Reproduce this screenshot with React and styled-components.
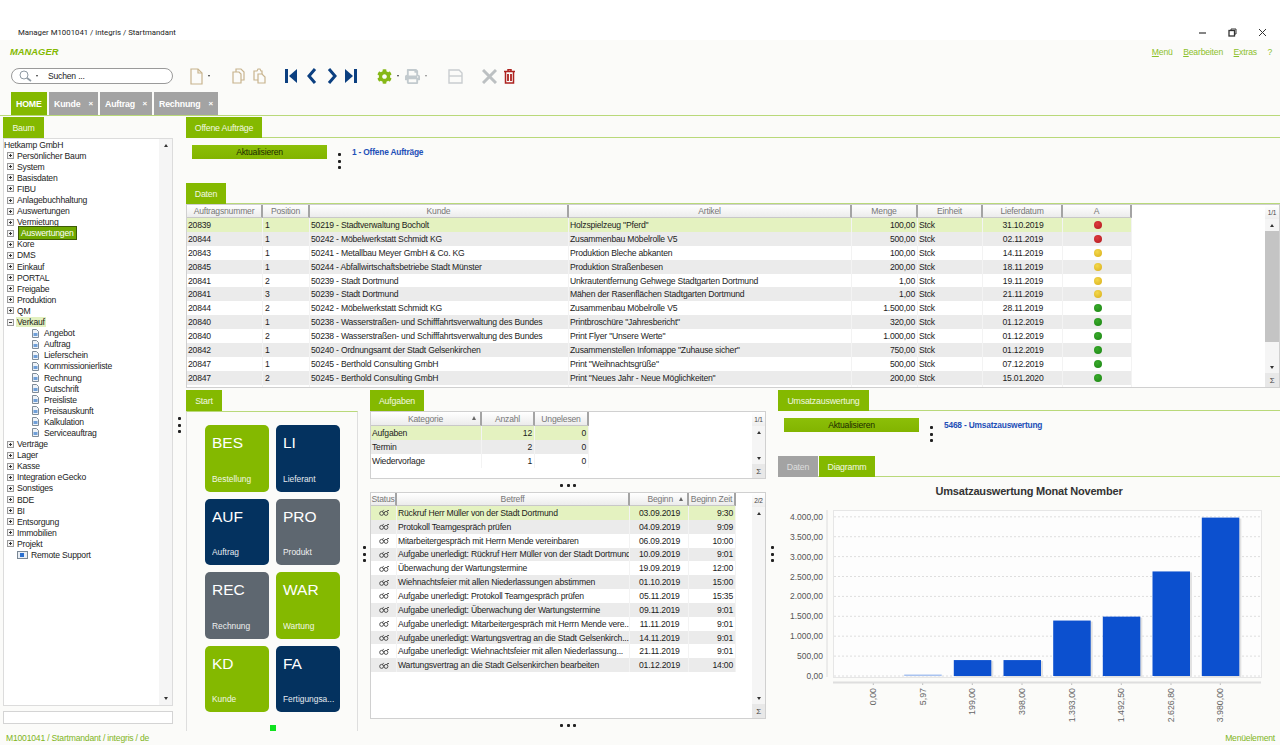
import React from 'react'
import styled, { createGlobalStyle } from 'styled-components'
import { FaCog, FaPrint } from 'react-icons/fa'

const GREEN = '#84b900'
const NAVY = '#04325f'
const SLATE = '#5e6770'

const GlobalStyle = createGlobalStyle`
  html, body { margin: 0; padding: 0; background: #fbfbf9; }
  * { box-sizing: border-box; }
`

const treeTop = ['Persönlicher Baum', 'System', 'Basisdaten', 'FIBU', 'Anlagebuchhaltung', 'Auswertungen', 'Vermietung']
const treeMid = ['Kore', 'DMS', 'Einkauf', 'PORTAL', 'Freigabe', 'Produktion', 'QM']
const treeSub = ['Angebot', 'Auftrag', 'Lieferschein', 'Kommissionierliste', 'Rechnung', 'Gutschrift', 'Preisliste', 'Preisauskunft', 'Kalkulation', 'Serviceauftrag']
const treeEnd = ['Verträge', 'Lager', 'Kasse', 'Integration eGecko', 'Sonstiges', 'BDE', 'BI', 'Entsorgung', 'Immobilien', 'Projekt']

const orders = [
  ['20839', '1', '50219 - Stadtverwaltung Bocholt', 'Holzspielzeug "Pferd"', '100,00', '31.10.2019', 'red'],
  ['20844', '1', '50242 - Möbelwerkstatt Schmidt KG', 'Zusammenbau Möbelrolle V5', '500,00', '02.11.2019', 'red'],
  ['20843', '1', '50241 - Metallbau Meyer GmbH & Co. KG', 'Produktion Bleche abkanten', '100,00', '14.11.2019', 'yellow'],
  ['20845', '1', '50244 - Abfallwirtschaftsbetriebe Stadt Münster', 'Produktion Straßenbesen', '200,00', '18.11.2019', 'yellow'],
  ['20841', '2', '50239 - Stadt Dortmund', 'Unkrautentfernung Gehwege Stadtgarten Dortmund', '1,00', '19.11.2019', 'yellow'],
  ['20841', '3', '50239 - Stadt Dortmund', 'Mähen der Rasenflächen Stadtgarten Dortmund', '1,00', '21.11.2019', 'yellow'],
  ['20844', '2', '50242 - Möbelwerkstatt Schmidt KG', 'Zusammenbau Möbelrolle V5', '1.500,00', '28.11.2019', 'green'],
  ['20840', '1', '50238 - Wasserstraßen- und Schifffahrtsverwaltung des Bundes', 'Printbroschüre "Jahresbericht"', '320,00', '01.12.2019', 'green'],
  ['20840', '2', '50238 - Wasserstraßen- und Schifffahrtsverwaltung des Bundes', 'Print Flyer "Unsere Werte"', '1.000,00', '01.12.2019', 'green'],
  ['20842', '1', '50240 - Ordnungsamt der Stadt Gelsenkirchen', 'Zusammenstellen Infomappe "Zuhause sicher"', '750,00', '01.12.2019', 'green'],
  ['20847', '1', '50245 - Berthold Consulting GmbH', 'Print "Weihnachtsgrüße"', '500,00', '07.12.2019', 'green'],
  ['20847', '2', '50245 - Berthold Consulting GmbH', 'Print "Neues Jahr - Neue Möglichkeiten"', '200,00', '15.01.2020', 'green'],
  ['', '', '', '', '', '', 'green'],
]

const categories = [['Aufgaben', '12', '0'], ['Termin', '2', '0'], ['Wiedervorlage', '1', '0']]

const tasks = [
  ['Rückruf Herr Müller von der Stadt Dortmund', '03.09.2019', '9:30'],
  ['Protokoll Teamgespräch prüfen', '04.09.2019', '9:09'],
  ['Mitarbeitergespräch mit Herrn Mende vereinbaren', '06.09.2019', '10:00'],
  ['Aufgabe unerledigt: Rückruf Herr Müller von der Stadt Dortmund', '10.09.2019', '9:01'],
  ['Überwachung der Wartungstermine', '19.09.2019', '12:00'],
  ['Wiehnachtsfeier mit allen Niederlassungen abstimmen', '01.10.2019', '15:00'],
  ['Aufgabe unerledigt: Protokoll Teamgespräch prüfen', '05.11.2019', '15:35'],
  ['Aufgabe unerledigt: Überwachung der Wartungstermine', '09.11.2019', '9:01'],
  ['Aufgabe unerledigt: Mitarbeitergespräch mit Herrn Mende vere...', '11.11.2019', '9:01'],
  ['Aufgabe unerledigt: Wartungsvertrag an die Stadt Gelsenkirch...', '14.11.2019', '9:01'],
  ['Aufgabe unerledigt: Wiehnachtsfeier mit allen Niederlassung...', '21.11.2019', '9:01'],
  ['Wartungsvertrag an die Stadt Gelsenkirchen bearbeiten', '01.12.2019', '14:00'],
]

const tiles = [
  ['BES', 'Bestellung', GREEN], ['LI', 'Lieferant', NAVY],
  ['AUF', 'Auftrag', NAVY], ['PRO', 'Produkt', SLATE],
  ['REC', 'Rechnung', SLATE], ['WAR', 'Wartung', GREEN],
  ['KD', 'Kunde', GREEN], ['FA', 'Fertigungsa...', NAVY],
]

const bars = [
  ['0,00', 0], ['5,97', 6], ['199,00', 400], ['398,00', 400],
  ['1.393,00', 1393], ['1.492,50', 1492], ['2.626,80', 2627], ['3.980,00', 3980],
]
const yTicks = [4000, 3500, 3000, 2500, 2000, 1500, 1000, 500, 0]
const barCenters = [873.3, 922.7, 972.3, 1022, 1071.7, 1121.3, 1171, 1220.3]
const yOf = v => 676 - v * 0.0398
const money = v => (v >= 1000 ? `${Math.floor(v / 1000)}.${String(v % 1000).padStart(3, '0')},00` : `${v},00`)

const Page = styled.div`
  width: 1280px;
  height: 745px;
  overflow: hidden;
  display: flex;
  flex-direction: column;
  background: #fbfbf9;
  color: #1c1c1c;
  font-family: "Liberation Sans", Arial, sans-serif;
  font-size: 8.6px;
  letter-spacing: -0.2px;
`
const TopGap = styled.div`
  height: 24px;
  background: #fff;
`
const TitleBar = styled.div`
  height: 16px;
  background: #fff;
  display: flex;
  align-items: center;
  justify-content: space-between;
  padding: 0 13px 0 18px;
  font-family: Roboto, sans-serif;
  font-size: 7.8px;
  letter-spacing: 0;
`
const WindowButtons = styled.div`
  display: flex;
  gap: 21px;
  align-items: center;
`
const MenuBar = styled.div`
  height: 22px;
  display: flex;
  align-items: center;
  justify-content: space-between;
  padding: 1px 8px 0 10px;
`
const Brand = styled.div`
  color: ${GREEN};
  font-weight: bold;
  font-style: italic;
  font-size: 9.4px;
  letter-spacing: 0;
`
const MenuLinks = styled.div`
  display: flex;
  gap: 10.5px;
  color: #8cc02a;
  letter-spacing: -0.17px;
  u { text-underline-offset: 1px; }
`
const Toolbar = styled.div`
  height: 28px;
  display: flex;
  align-items: center;
  padding-left: 11px;
`
const SearchBox = styled.div`
  width: 162px;
  height: 16px;
  border: 1px solid #9a9a9a;
  border-radius: 8px;
  background: #fff;
  display: flex;
  align-items: center;
  padding-left: 7px;
  flex-shrink: 0;
`
const SearchLabel = styled.span`
  margin-left: 10px;
`
const ToolSlot = styled.div`
  margin-left: ${p => p.$left}px;
  display: flex;
  align-items: center;
  flex-shrink: 0;
`
const Caret = styled.span`
  width: 0;
  height: 0;
  margin-left: ${p => p.$left || 5}px;
  border-left: 1.5px solid transparent;
  border-right: 1.5px solid transparent;
  border-top: 2px solid ${p => p.$color || '#333'};
`
const TabBar = styled.div`
  height: 26px;
  display: flex;
  align-items: flex-end;
  gap: 2px;
  padding: 0 0 0 11px;
  border-bottom: 1px solid #b9d97a;
`
const AppTab = styled.div`
  height: 23px;
  width: ${p => p.$width}px;
  background: ${p => (p.$active ? GREEN : '#a3a3a3')};
  color: #fff;
  font-weight: bold;
  font-size: 8.8px;
  display: flex;
  align-items: center;
  justify-content: space-between;
  padding: 0 5px;
  small { font-size: 8px; }
`
const Main = styled.div`
  flex: 1;
  min-height: 0;
  display: flex;
  padding: 1px 0 0 3px;
`
const LeftColumn = styled.div`
  width: 170px;
  display: flex;
  flex-direction: column;
`
const TabRow = styled.div`
  display: flex;
  gap: 1px;
  height: ${p => p.$height || 21}px;
  border-bottom: ${p => (p.$line === false ? 'none' : '1px solid #b9d97a')};
  flex-shrink: 0;
`
const PanelTab = styled.div`
  width: ${p => p.$width}px;
  background: ${p => (p.$muted ? '#a3a3a3' : GREEN)};
  color: ${p => (p.$muted ? '#ddd' : '#f2f8e0')};
  font-size: 8.8px;
  display: flex;
  align-items: center;
  justify-content: center;
  margin-bottom: -1px;
`
const TreeBox = styled.div`
  height: 568px;
  display: flex;
  border: 1px solid #dcdcdc;
  background: #fff;
`
const Tree = styled.div`
  flex: 1;
  overflow: hidden;
`
const TreeRow = styled.div`
  height: 11.1px;
  display: flex;
  align-items: center;
  white-space: nowrap;
  padding-left: ${p => p.$indent || 0}px;
`
const PlusBox = styled.span`
  width: 7px;
  height: 7px;
  flex-shrink: 0;
  border: 1px solid #9a9a9a;
  margin-right: 3px;
  background:
    linear-gradient(#333, #333) center / 3px 1px no-repeat,
    ${p => (p.$open ? '' : 'linear-gradient(#333, #333) center / 1px 3px no-repeat,')}
    #f4f4f4;
`
const TreeGap = styled.span`
  width: ${p => p.$width}px;
  flex-shrink: 0;
`
const Marked = styled.span`
  background: ${p => (p.$current ? '#6ea800' : '#e3f1c0')};
  color: ${p => (p.$current ? '#fff' : 'inherit')};
  border: ${p => (p.$current ? '1px solid #3e5a08' : 'none')};
  padding: ${p => (p.$current ? '1px 2px' : '0 1px')};
  margin-left: ${p => (p.$current ? 1 : -1)}px;
  line-height: 10px;
`
const TreeScroll = styled.div`
  width: 13px;
  background: #f5f5f5;
  display: flex;
  flex-direction: column;
  justify-content: space-between;
  align-items: center;
  padding: 5px 0;
`
const Arrow = styled.span`
  width: 0;
  height: 0;
  border-left: 2.5px solid transparent;
  border-right: 2.5px solid transparent;
  ${p => (p.$down ? 'border-top: 3px solid #333;' : 'border-bottom: 3px solid #333;')}
`
const TreeInput = styled.div`
  height: 13px;
  margin-top: 5px;
  background: #fff;
  border: 1px solid #d4d4d4;
`
const Gutter = styled.div`
  width: ${p => p.$width || 13}px;
  padding-top: ${p => p.$top || 0}px;
  display: flex;
  flex-direction: column;
  align-items: center;
  flex-shrink: 0;
`
const Dots = styled.div`
  display: flex;
  flex-direction: ${p => (p.$row ? 'row' : 'column')};
  gap: 3.5px;
  justify-content: center;
  span {
    width: 3px;
    height: 3px;
    background: #222;
    border-radius: 1px;
  }
`
const ThreeDots = ({ row }) => (
  <Dots $row={row}><span /><span /><span /></Dots>
)
const Work = styled.div`
  flex: 1;
  min-width: 0;
  display: flex;
  flex-direction: column;
`
const ActionRow = styled.div`
  height: ${p => p.$height}px;
  display: flex;
  align-items: flex-start;
  padding: ${p => p.$top}px 0 0 6px;
  flex-shrink: 0;
`
const RefreshButton = styled.div`
  width: 135px;
  height: 14px;
  background: linear-gradient(#8cbf08, #82b400);
  color: #1c2a00;
  display: flex;
  align-items: center;
  justify-content: center;
`
const ActionDots = styled.div`
  width: 25px;
  padding-top: 8px;
  display: flex;
  justify-content: center;
`
const ReportLink = styled.div`
  color: #1f50b8;
  font-weight: bold;
  font-size: 8.4px;
  padding-top: 2px;
`
const TableFrame = styled.div`
  height: ${p => p.$height}px;
  display: flex;
  border: 1px solid #d0d0d0;
  background: #fff;
  overflow: hidden;
  flex-shrink: 0;
`
const TableBody = styled.div`
  flex: 1;
  min-width: 0;
`
const GridRow = styled.div`
  display: grid;
  grid-template-columns: ${p => p.$cols};
  width: fit-content;
  height: ${p => p.$height}px;
  background: ${p => (p.$selected ? '#e4f2c0' : p.$stripe ? '#ebebeb' : '#fff')};
`
const HeadCell = styled.div`
  position: relative;
  background: linear-gradient(#fff, #ececec);
  border-right: 2px solid #a4a4a4;
  border-bottom: 1px solid #c8c8c8;
  color: #777;
  display: flex;
  align-items: center;
  justify-content: ${p => p.$align || 'center'};
  padding: 0 ${p => (p.$align ? 14 : 2)}px 0 2px;
  white-space: nowrap;
  overflow: hidden;
`
const SortMark = styled.span`
  position: absolute;
  right: 4px;
  top: 4px;
  width: 0;
  height: 0;
  border-left: 2px solid transparent;
  border-right: 2px solid transparent;
  border-bottom: 4px solid #666;
`
const Cell = styled.div`
  display: flex;
  align-items: center;
  justify-content: ${p => p.$align || 'flex-start'};
  padding: 0 ${p => (p.$align === 'flex-end' ? 2 : 0)}px 0 ${p => p.$pad || 1}px;
  border-right: 1px solid #f3f3f3;
  white-space: nowrap;
  overflow: hidden;
`
const Lamp = styled.span`
  width: 8px;
  height: 8px;
  border-radius: 50%;
  flex-shrink: 0;
  background: ${p => ({ red: 'radial-gradient(circle at 40% 35%, #de3a3e, #b01a1e)', yellow: 'radial-gradient(circle at 40% 35%, #f4d84a, #d8ae1c)', green: 'radial-gradient(circle at 40% 35%, #38aa2a, #1c8414)' }[p.$color])};
`
const ScrollRail = styled.div`
  width: ${p => p.$width}px;
  flex-shrink: 0;
  background: #f5f5f5;
  display: flex;
  flex-direction: column;
  align-items: center;
  font-size: 6.5px;
  color: #444;
`
const RailLabel = styled.div`
  height: 14px;
  width: 100%;
  display: flex;
  align-items: center;
  justify-content: center;
  background: linear-gradient(#fff, #eee);
`
const RailArrow = styled.div`
  height: 12px;
  width: 100%;
  display: flex;
  align-items: center;
  justify-content: center;
`
const RailTrack = styled.div`
  flex: 1;
  width: 100%;
  min-height: 0;
`
const RailThumb = styled.div`
  height: ${p => p.$height}px;
  background: #c4c4c4;
`
const RailSum = styled.div`
  height: 14px;
  width: 100%;
  background: #e8e8e8;
  display: flex;
  align-items: center;
  justify-content: center;
  font-size: 8px;
`
const Rail = ({ label, width, thumb }) => (
  <ScrollRail $width={width}>
    <RailLabel>{label}</RailLabel>
    <RailArrow><Arrow /></RailArrow>
    <RailTrack>{thumb ? <RailThumb $height={thumb} /> : null}</RailTrack>
    <RailArrow><Arrow $down /></RailArrow>
    <RailSum>Σ</RailSum>
  </ScrollRail>
)
const BottomRow = styled.div`
  flex: 1;
  min-height: 0;
  display: flex;
  margin-top: 2px;
`
const StartColumn = styled.div`
  width: 172px;
  display: flex;
  flex-direction: column;
  flex-shrink: 0;
`
const StartPanel = styled.div`
  flex: 1;
  border: 1px solid #dedede;
  border-top-color: #b9d97a;
  border-bottom: none;
  padding: 13px 0 0 18px;
  display: flex;
  flex-direction: column;
`
const TileGrid = styled.div`
  display: grid;
  grid-template-columns: 64px 64px;
  grid-auto-rows: 66.5px;
  gap: 7px;
`
const Tile = styled.div`
  background: ${p => p.$color};
  border-radius: 5px;
  color: #fff;
  display: flex;
  flex-direction: column;
  justify-content: space-between;
  padding: 10px 4px 8px 7px;
  overflow: hidden;
  letter-spacing: 0;
  strong {
    font-weight: normal;
    font-size: 15.5px;
    line-height: 16px;
  }
  span {
    font-size: 8.4px;
    white-space: nowrap;
    opacity: .9;
  }
`
const PageMark = styled.div`
  width: 6px;
  height: 6px;
  background: #0fe21f;
  margin: 13px 0 0 65px;
`
const MiddleColumn = styled.div`
  width: 396px;
  display: flex;
  flex-direction: column;
  flex-shrink: 0;
`
const HDots = styled.div`
  height: 13px;
  display: flex;
  align-items: center;
  justify-content: center;
  flex-shrink: 0;
`
const ReportColumn = styled.div`
  flex: 1;
  min-width: 0;
  display: flex;
  flex-direction: column;
`
const ChartTitle = styled.div`
  height: 26px;
  display: flex;
  align-items: center;
  justify-content: center;
  font-weight: bold;
  font-size: 11px;
  color: #333;
  padding-top: 2px;
  flex-shrink: 0;
`
const ChartSvg = styled.svg`
  display: block;
  width: 502px;
  height: 227px;
  font-family: "Liberation Sans", Arial, sans-serif;
  letter-spacing: 0;
`
const StatusBar = styled.div`
  height: 15px;
  flex-shrink: 0;
  display: flex;
  align-items: center;
  justify-content: space-between;
  padding: 0 5px 0 6px;
  color: #7fb51c;
`

const FileIcon = () => (
  <svg width="13" height="17" viewBox="0 0 13 17" fill="none" stroke="#c8b48e" strokeWidth="1.2">
    <path d="M1 1h7l4 4v11H1z" /><path d="M8 1v4h4" />
  </svg>
)
const CopyIcon = () => (
  <svg width="13" height="16" viewBox="0 0 13 16" fill="#fbfbf9" stroke="#c8b48e" strokeWidth="1.2">
    <path d="M4 1h5l3 3v8H4z" /><path d="M1 4h6l2 2v9H1z" />
  </svg>
)
const PasteIcon = () => (
  <svg width="13" height="16" viewBox="0 0 13 16" fill="#fbfbf9" stroke="#c8b48e" strokeWidth="1.2">
    <path d="M1 3h3l1-2h2l1 2h1v9H1z" /><path d="M5 6h4l3 3v6H5z" />
  </svg>
)
const NavIcon = ({ kind }) => {
  const wide = kind === 'first' || kind === 'last'
  const shapes = {
    first: <><rect x="0" y="1" width="3" height="14" /><path d="M12 1v14L4 8z" /></>,
    prev: <path d="M8 1 2 8l6 7" fill="none" stroke="#0b3f80" strokeWidth="3" />,
    next: <path d="M2 1l6 7-6 7" fill="none" stroke="#0b3f80" strokeWidth="3" />,
    last: <><rect x="9" y="1" width="3" height="14" /><path d="M0 1v14L8 8z" /></>,
  }
  return <svg width={wide ? 12 : 10} height="16" viewBox={`0 0 ${wide ? 12 : 10} 16`} fill="#0b3f80">{shapes[kind]}</svg>
}
const SaveIcon = () => (
  <svg width="15" height="15" viewBox="0 0 15 15" fill="none" stroke="#c9cdd0" strokeWidth="1.4">
    <path d="M1 1h10l3 3v10H1z" /><path d="M1 7h13" />
  </svg>
)
const CloseIcon = () => (
  <svg width="15" height="15" viewBox="0 0 15 15" stroke="#bcc0c2" strokeWidth="3">
    <path d="M1 1l13 13M14 1 1 14" />
  </svg>
)
const TrashIcon = () => (
  <svg width="11" height="15" viewBox="0 0 11 15" fill="none" stroke="#ad2320" strokeWidth="1.5">
    <path d="M0 2.5h11" /><path d="M4 2V.8h3V2" /><path d="M1.5 3v11h8V3" />
    <path d="M4 5v7M7 5v7" strokeWidth="1.8" />
  </svg>
)
const Magnifier = () => (
  <svg width="13" height="12" viewBox="0 0 13 12" fill="none" stroke="#8f9aa3" strokeWidth="1">
    <circle cx="5" cy="5" r="4" /><path d="M8 8l4 3" strokeWidth="1.6" />
  </svg>
)
const DocIcon = () => (
  <svg width="7" height="9" viewBox="0 0 7 9">
    <path d="M.5.5h4l2 2v6h-6z" fill="#eef3f8" stroke="#7f8c99" />
    <path d="M1.5 4h4v3h-4z" fill="#6f9fd8" />
  </svg>
)
const RemoteIcon = () => (
  <svg width="11" height="8" viewBox="0 0 11 8">
    <rect x=".5" y=".5" width="10" height="7" fill="#e8eef5" stroke="#7a8794" />
    <rect x="3" y="2" width="4" height="4" fill="#2a6fd0" />
  </svg>
)
const Glasses = () => (
  <svg width="11" height="7" viewBox="0 0 11 7" fill="none" stroke="#444" strokeWidth=".9">
    <ellipse cx="2.6" cy="4.4" rx="1.9" ry="2" /><ellipse cx="7" cy="4.4" rx="1.9" ry="2" />
    <path d="M4.5 4c.3-.5.7-.5 1 0M3.500 2.600 4.600.9M8 2.600 9 1l1 1" />
  </svg>
)
const WinIcon = ({ kind }) => (
  <svg width="9" height="9" viewBox="0 0 9 9" fill="none" stroke="#333" strokeWidth="1">
    {kind === 'min' && <path d="M1 5h7" strokeWidth="1.2" />}
    {kind === 'max' && <><rect x="1" y="2.5" width="5.5" height="5.5" strokeWidth="1.3" /><path d="M3 2.5V1h5v5H6.5" /></>}
    {kind === 'close' && <path d="M1 1l7 7M8 1 1 8" />}
  </svg>
)

const orderCols = '76px 47px 259px 283px 66px 65px 80px 69px'
const categoryCols = '111px 53px 54px'
const taskCols = '26px 233px 59px 47px'

const TreeItem = ({ label }) => (
  <TreeRow $indent={3}><PlusBox />{label}</TreeRow>
)

const Chart = () => (
  <ChartSvg viewBox="778 503 502 227">
    <rect x="833.5" y="510.5" width="428" height="167" fill="#fdfdfd" stroke="#e6e6e6" />
    <path d="M827 510v167" stroke="#dcdcdc" />
    {yTicks.map(v => (
      <g key={v}>
        <path d={`M834 ${yOf(v)}H1261`} stroke="#dedede" strokeDasharray="2 2" />
        <text x="823" y={yOf(v) + 3} textAnchor="end" fontSize="8.5" fill="#555">{money(v)}</text>
      </g>
    ))}
    {bars.map(([label, value], i) => {
      const x = barCenters[i] - 18.5
      const isTiny = value > 0 && value < 50
      return (
        <g key={label}>
          {value > 0 && <rect x={x + 2} y={yOf(value) + 1} width="37.5" height={value * 0.0398} fill="#e2e2e2" />}
          {value > 0 && <rect x={x} y={isTiny ? 674.5 : yOf(value)} width="37.5" height={isTiny ? 1.5 : value * 0.0398} fill={isTiny ? '#a9c3f0' : '#0c50cf'} />}
          <path d={`M${barCenters[i]} 683v2`} stroke="#bbb" />
          <text transform={`translate(${barCenters[i] + 3} 688) rotate(-90)`} textAnchor="end" fontSize="8.8" fill="#666">{label}</text>
        </g>
      )
    })}
    <path d="M833 682.5H1261" stroke="#dedede" strokeWidth="2" />
  </ChartSvg>
)

const App = () => (
  <Page>
    <GlobalStyle />
    <TopGap />
    <TitleBar>
      <span>Manager M1001041 / integris / Startmandant</span>
      <WindowButtons>
        <WinIcon kind="min" /><WinIcon kind="max" /><WinIcon kind="close" />
      </WindowButtons>
    </TitleBar>
    <MenuBar>
      <Brand>MANAGER</Brand>
      <MenuLinks>
        <span><u>M</u>enü</span>
        <span><u>B</u>earbeiten</span>
        <span><u>E</u>xtras</span>
        <span>?</span>
      </MenuLinks>
    </MenuBar>
    <Toolbar>
      <SearchBox><Magnifier /><Caret $left={4} /><SearchLabel>Suchen ...</SearchLabel></SearchBox>
      <ToolSlot $left={17}><FileIcon /><Caret /></ToolSlot>
      <ToolSlot $left={22}><CopyIcon /></ToolSlot>
      <ToolSlot $left={8}><PasteIcon /></ToolSlot>
      <ToolSlot $left={19}><NavIcon kind="first" /></ToolSlot>
      <ToolSlot $left={10}><NavIcon kind="prev" /></ToolSlot>
      <ToolSlot $left={10}><NavIcon kind="next" /></ToolSlot>
      <ToolSlot $left={8}><NavIcon kind="last" /></ToolSlot>
      <ToolSlot $left={20}><FaCog size={15} color="#86b817" /><Caret /></ToolSlot>
      <ToolSlot $left={6}><FaPrint size={15} color="#c2cace" /><Caret $color="#888" /></ToolSlot>
      <ToolSlot $left={21}><SaveIcon /></ToolSlot>
      <ToolSlot $left={19}><CloseIcon /></ToolSlot>
      <ToolSlot $left={7}><TrashIcon /></ToolSlot>
    </Toolbar>
    <TabBar>
      <AppTab $active $width={36}>HOME</AppTab>
      <AppTab $width={49}>Kunde <small>×</small></AppTab>
      <AppTab $width={52}>Auftrag <small>×</small></AppTab>
      <AppTab $width={64}>Rechnung <small>×</small></AppTab>
    </TabBar>
    <Main>
      <LeftColumn>
        <TabRow $line={false}><PanelTab $width={41}>Baum</PanelTab></TabRow>
        <TreeBox>
          <Tree>
            <TreeRow>Hetkamp GmbH</TreeRow>
            {treeTop.map(t => <TreeItem key={t} label={t} />)}
            <TreeRow $indent={3}><PlusBox /><Marked $current>Auswertungen</Marked></TreeRow>
            {treeMid.map(t => <TreeItem key={t} label={t} />)}
            <TreeRow $indent={3}><PlusBox $open /><Marked>Verkauf</Marked></TreeRow>
            {treeSub.map(t => (
              <TreeRow key={t} $indent={28}><DocIcon /><TreeGap $width={5} />{t}</TreeRow>
            ))}
            {treeEnd.map(t => <TreeItem key={t} label={t} />)}
            <TreeRow $indent={13}><RemoteIcon /><TreeGap $width={3} />Remote Support</TreeRow>
          </Tree>
          <TreeScroll><Arrow /><Arrow $down /></TreeScroll>
        </TreeBox>
        <TreeInput />
      </LeftColumn>
      <Gutter $top={300}><ThreeDots /></Gutter>
      <Work>
        <TabRow><PanelTab $width={76}>Offene Aufträge</PanelTab></TabRow>
        <ActionRow $height={45} $top={7}>
          <RefreshButton>Aktualisieren</RefreshButton>
          <ActionDots><ThreeDots /></ActionDots>
          <ReportLink>1 - Offene Aufträge</ReportLink>
        </ActionRow>
        <TabRow><PanelTab $width={40}>Daten</PanelTab></TabRow>
        <TableFrame $height={184}>
          <TableBody>
            <GridRow $cols={orderCols} $height={13}>
              {['Auftragsnummer', 'Position', 'Kunde', 'Artikel', 'Menge', 'Einheit', 'Lieferdatum', 'A'].map(h => <HeadCell key={h}>{h}</HeadCell>)}
            </GridRow>
            {orders.map((r, i) => (
              <GridRow key={i} $cols={orderCols} $height={13.9} $selected={i === 0} $stripe={i % 2 === 1}>
                <Cell>{r[0]}</Cell>
                <Cell $pad={2}>{r[1]}</Cell>
                <Cell>{r[2]}</Cell>
                <Cell>{r[3]}</Cell>
                <Cell $align="flex-end">{r[4]}</Cell>
                <Cell>{r[4] && 'Stck'}</Cell>
                <Cell $align="center">{r[5]}</Cell>
                <Cell $align="center"><Lamp $color={r[6]} /></Cell>
              </GridRow>
            ))}
          </TableBody>
          <Rail label="1/1" width={14} thumb={111} />
        </TableFrame>
        <BottomRow>
          <StartColumn>
            <TabRow $line={false}><PanelTab $width={36}>Start</PanelTab></TabRow>
            <StartPanel>
              <TileGrid>
                {tiles.map(([code, name, color]) => (
                  <Tile key={code} $color={color}><strong>{code}</strong><span>{name}</span></Tile>
                ))}
              </TileGrid>
              <PageMark />
            </StartPanel>
          </StartColumn>
          <Gutter $width={12} $top={156}><ThreeDots /></Gutter>
          <MiddleColumn>
            <TabRow $line={false}><PanelTab $width={54}>Aufgaben</PanelTab></TabRow>
            <TableFrame $height={68}>
              <TableBody>
                <GridRow $cols={categoryCols} $height={14}>
                  <HeadCell>Kategorie<SortMark /></HeadCell><HeadCell>Anzahl</HeadCell><HeadCell>Ungelesen</HeadCell>
                </GridRow>
                {categories.map((r, i) => (
                  <GridRow key={r[0]} $cols={categoryCols} $height={13.85} $selected={i === 0} $stripe={i === 1}>
                    <Cell>{r[0]}</Cell><Cell $align="flex-end">{r[1]}</Cell><Cell $align="flex-end">{r[2]}</Cell>
                  </GridRow>
                ))}
              </TableBody>
              <Rail label="1/1" width={13} />
            </TableFrame>
            <HDots><ThreeDots row /></HDots>
            <TableFrame $height={227}>
              <TableBody>
                <GridRow $cols={taskCols} $height={13}>
                  <HeadCell>Status</HeadCell><HeadCell>Betreff</HeadCell><HeadCell $align="flex-end">Beginn<SortMark /></HeadCell><HeadCell>Beginn Zeit</HeadCell>
                </GridRow>
                {tasks.map((r, i) => (
                  <GridRow key={r[0]} $cols={taskCols} $height={13.85} $selected={i === 0} $stripe={i % 2 === 1}>
                    <Cell $align="center"><Glasses /></Cell>
                    <Cell>{r[0]}</Cell>
                    <Cell $align="center">{r[1]}</Cell>
                    <Cell $align="flex-end">{r[2]}</Cell>
                  </GridRow>
                ))}
              </TableBody>
              <Rail label="2/2" width={13} />
            </TableFrame>
            <HDots><ThreeDots row /></HDots>
          </MiddleColumn>
          <Gutter $width={12} $top={156}><ThreeDots /></Gutter>
          <ReportColumn>
            <TabRow><PanelTab $width={91}>Umsatzauswertung</PanelTab></TabRow>
            <ActionRow $height={45} $top={7}>
              <RefreshButton>Aktualisieren</RefreshButton>
              <ActionDots><ThreeDots /></ActionDots>
              <ReportLink>5468 - Umsatzauswertung</ReportLink>
            </ActionRow>
            <TabRow>
              <PanelTab $muted $width={40}>Daten</PanelTab>
              <PanelTab $width={56}>Diagramm</PanelTab>
            </TabRow>
            <ChartTitle>Umsatzauswertung Monat November</ChartTitle>
            <Chart />
          </ReportColumn>
        </BottomRow>
      </Work>
    </Main>
    <StatusBar>
      <span>M1001041 / Startmandant / integris / de</span>
      <span>Menüelement</span>
    </StatusBar>
  </Page>
)

export default App
